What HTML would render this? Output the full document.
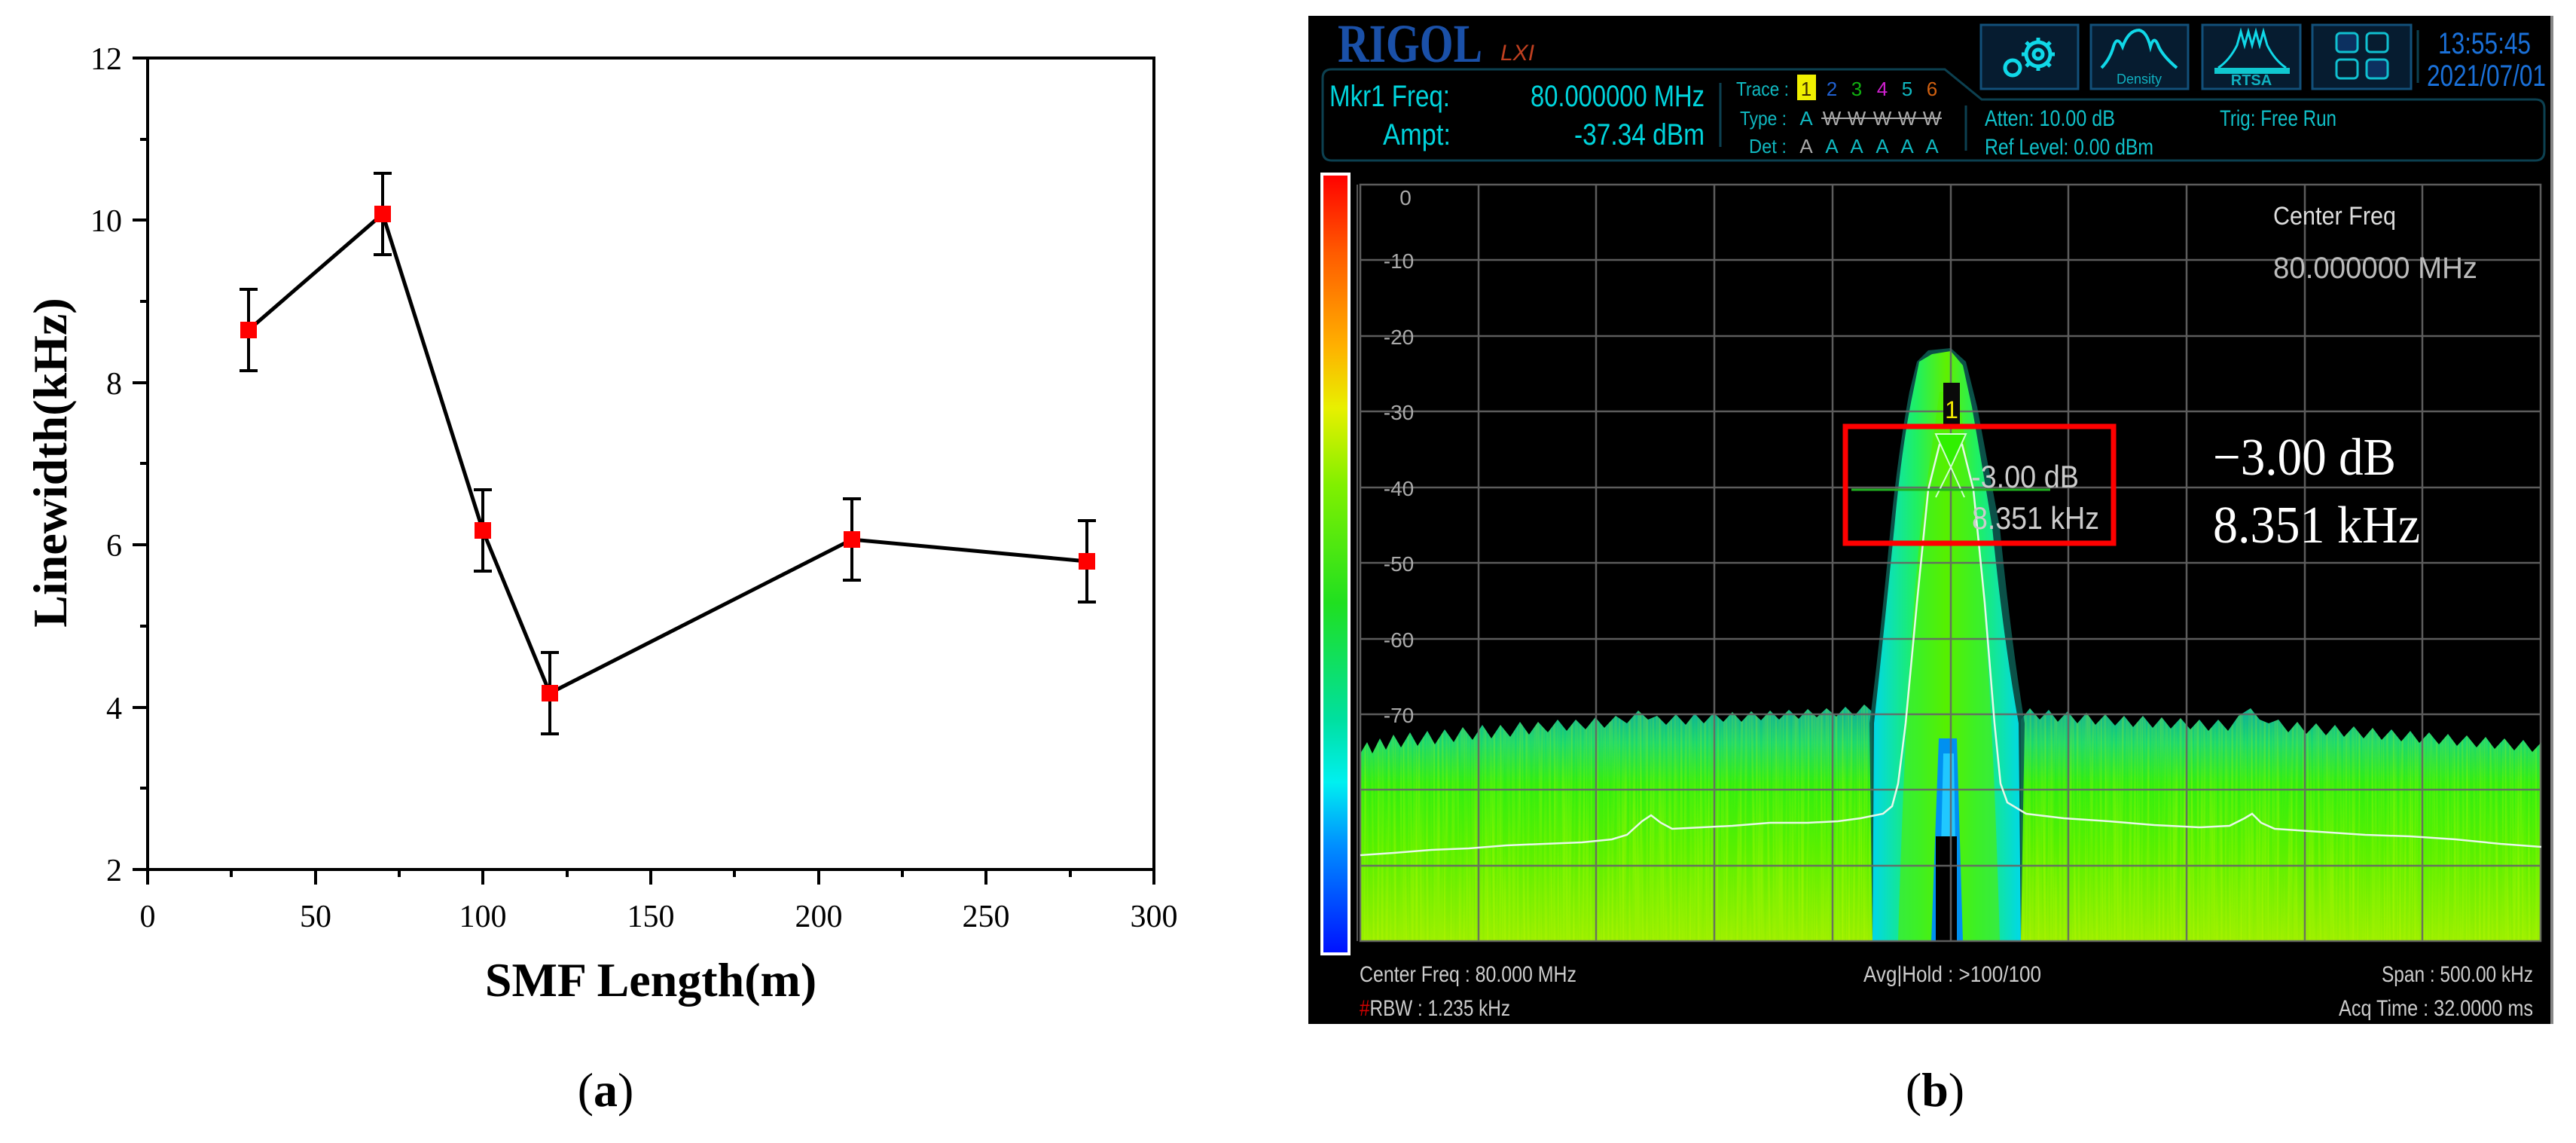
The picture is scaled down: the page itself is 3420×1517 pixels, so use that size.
<!DOCTYPE html>
<html><head><meta charset="utf-8">
<style>
html,body{margin:0;padding:0;background:#fff;width:3420px;height:1517px;overflow:hidden}
svg{display:block}
.ser{font-family:"Liberation Serif",serif}
.nar{font-family:"Liberation Sans",sans-serif}
</style></head><body>
<svg width="3420" height="1517" viewBox="0 0 3420 1517" xmlns="http://www.w3.org/2000/svg">
<defs>
<linearGradient id="cbar" x1="0" y1="0" x2="0" y2="1">
<stop offset="0" stop-color="#ff0000"/><stop offset="0.1" stop-color="#ff5a00"/><stop offset="0.22" stop-color="#ffb000"/>
<stop offset="0.3" stop-color="#e8f000"/><stop offset="0.4" stop-color="#80f000"/><stop offset="0.55" stop-color="#20e020"/>
<stop offset="0.7" stop-color="#00e0a0"/><stop offset="0.78" stop-color="#00f0f0"/><stop offset="0.86" stop-color="#0090ff"/>
<stop offset="1" stop-color="#0010ff"/></linearGradient>
<linearGradient id="floor" x1="0" y1="950" x2="0" y2="1249" gradientUnits="userSpaceOnUse">
<stop offset="0" stop-color="#10b890"/><stop offset="0.12" stop-color="#18d870"/><stop offset="0.3" stop-color="#30ee10"/>
<stop offset="0.6" stop-color="#58f000"/><stop offset="1" stop-color="#98ee00"/></linearGradient>
<linearGradient id="pk2" x1="0" y1="0" x2="1" y2="0">
<stop offset="0" stop-color="#00d8e8"/><stop offset="0.3" stop-color="#20f060"/><stop offset="0.5" stop-color="#60f000"/><stop offset="0.7" stop-color="#20f060"/><stop offset="1" stop-color="#00d8e8"/></linearGradient>
<filter id="streak" x="0" y="0" width="1" height="1">
<feTurbulence type="fractalNoise" baseFrequency="0.35 0.004" numOctaves="2" seed="3"/>
<feColorMatrix type="matrix" values="0 0 0 0 0.7  0 0 0 0 1  0 0 0 0 0  0 0 0 1.2 -0.45"/>
</filter>
<clipPath id="flc"><use href="#fl"/></clipPath>
</defs>

<g stroke="#000" stroke-width="4" fill="none">
<rect x="196" y="77" width="1336" height="1077"/>
<path d="M176 77H196 M176 292H196 M176 508H196 M176 723H196 M176 939H196 M176 1154H196 M186 185H196 M186 400H196 M186 615H196 M186 831H196 M186 1046H196"/>
<path d="M196 1154V1174 M419 1154V1174 M641 1154V1174 M864 1154V1174 M1087 1154V1174 M1309 1154V1174 M1532 1154V1174 M307 1154V1164 M530 1154V1164 M753 1154V1164 M975 1154V1164 M1198 1154V1164 M1421 1154V1164"/>
</g>
<g class="ser" font-size="42" fill="#000" text-anchor="end">
<text x="162" y="92">12</text><text x="162" y="307">10</text><text x="162" y="523">8</text>
<text x="162" y="738">6</text><text x="162" y="954">4</text><text x="162" y="1169">2</text>
</g>
<g class="ser" font-size="42" fill="#000" text-anchor="middle">
<text x="196" y="1230">0</text><text x="419" y="1230">50</text><text x="641" y="1230">100</text><text x="864" y="1230">150</text>
<text x="1087" y="1230">200</text><text x="1309" y="1230">250</text><text x="1532" y="1230">300</text>
</g>
<text class="ser" font-size="64" font-weight="bold" text-anchor="middle" transform="translate(88,614) rotate(-90)">Linewidth(kHz)</text>
<text class="ser" font-size="64" font-weight="bold" text-anchor="middle" x="864" y="1322">SMF Length(m)</text>
<text class="ser" font-size="64" text-anchor="middle" x="804" y="1468">(<tspan font-weight="bold">a</tspan>)</text>
<polyline points="330,438 508,284 641,704 730,920 1131,716 1443,745" fill="none" stroke="#000" stroke-width="5"/>
<g stroke="#000" stroke-width="4">
<path d="M330 384V492 M318 384H342 M318 492H342"/>
<path d="M508 230V338 M496 230H520 M496 338H520"/>
<path d="M641 650V758 M629 650H653 M629 758H653"/>
<path d="M730 866V974 M718 866H742 M718 974H742"/>
<path d="M1131 662V770 M1119 662H1143 M1119 770H1143"/>
<path d="M1443 691V799 M1431 691H1455 M1431 799H1455"/>
</g>
<g fill="#f00">
<rect x="319" y="427" width="22" height="22"/><rect x="497" y="273" width="22" height="22"/>
<rect x="630" y="693" width="22" height="22"/><rect x="719" y="909" width="22" height="22"/>
<rect x="1120" y="705" width="22" height="22"/><rect x="1432" y="734" width="22" height="22"/>
</g>

<rect x="1737" y="21" width="1653" height="1338" fill="#000"/>
<rect x="3386" y="21" width="4" height="1338" fill="#888"/>
<text x="1776" y="82" font-family="Liberation Serif,serif" font-weight="bold" font-size="72" fill="#1a50a8" textLength="192" lengthAdjust="spacingAndGlyphs">RIGOL</text>
<text x="1992" y="80" font-family="Liberation Sans,sans-serif" font-style="italic" font-size="30" fill="#c04020">LXI</text>
<path d="M1768 92H2582L2631 132H3366Q3378 132 3378 144V200Q3378 213 3366 213H1768Q1756 213 1756 200V104Q1756 92 1768 92Z" fill="none" stroke="#0c4050" stroke-width="3"/>
<g class="nar" fill="#00d4dc" font-size="40">
<text x="1765" y="141" textLength="160" lengthAdjust="spacingAndGlyphs">Mkr1 Freq:</text>
<text x="1836" y="192" textLength="90" lengthAdjust="spacingAndGlyphs">Ampt:</text>
<text x="2032" y="141" textLength="231" lengthAdjust="spacingAndGlyphs">80.000000 MHz</text>
<text x="2090" y="192" textLength="173" lengthAdjust="spacingAndGlyphs">-37.34 dBm</text>
</g>
<path d="M2284 110V195 M2610 140V200 M3210 40V110" stroke="#0c4050" stroke-width="3"/>
<g class="nar" font-size="26" fill="#10b8c0">
<text x="2305" y="127" textLength="70" lengthAdjust="spacingAndGlyphs">Trace :</text>
<text x="2310" y="166" textLength="62" lengthAdjust="spacingAndGlyphs">Type :</text>
<text x="2322" y="203" textLength="50" lengthAdjust="spacingAndGlyphs">Det :</text>
</g>
<rect x="2386" y="99" width="25" height="34" fill="#f0f000"/>
<g class="nar" font-size="26" text-anchor="middle">
<text x="2398" y="127" fill="#403000">1</text><text x="2432" y="127" fill="#2060d0">2</text><text x="2465" y="127" fill="#10b010">3</text>
<text x="2499" y="127" fill="#d020d0">4</text><text x="2532" y="127" fill="#10b8c0">5</text><text x="2565" y="127" fill="#d06010">6</text>
<text x="2398" y="166" fill="#10b8c0">A</text><text x="2432" y="166" fill="#aaa">W</text><text x="2465" y="166" fill="#aaa">W</text>
<text x="2499" y="166" fill="#aaa">W</text><text x="2532" y="166" fill="#aaa">W</text><text x="2565" y="166" fill="#aaa">W</text>
<text x="2398" y="203" fill="#aaa">A</text><text x="2432" y="203" fill="#10b8c0">A</text><text x="2465" y="203" fill="#10b8c0">A</text>
<text x="2499" y="203" fill="#10b8c0">A</text><text x="2532" y="203" fill="#10b8c0">A</text><text x="2565" y="203" fill="#10b8c0">A</text>
</g>
<path d="M2418 157H2578" stroke="#aaa" stroke-width="2"/>
<g class="nar" font-size="30" fill="#10c0c8">
<text x="2635" y="167" textLength="173" lengthAdjust="spacingAndGlyphs">Atten: 10.00 dB</text>
<text x="2635" y="205" textLength="224" lengthAdjust="spacingAndGlyphs">Ref Level: 0.00 dBm</text>
<text x="2947" y="167" textLength="155" lengthAdjust="spacingAndGlyphs">Trig: Free Run</text>
</g>
<g fill="#061c30" stroke="#12507a" stroke-width="3">
<rect x="2630" y="33" width="129" height="85"/><rect x="2776" y="33" width="129" height="85"/>
<rect x="2924" y="33" width="130" height="85"/><rect x="3070" y="33" width="131" height="85"/>
</g>
<g fill="none" stroke="#10d8e8" stroke-width="5">
<circle cx="2706" cy="72" r="16"/><circle cx="2706" cy="72" r="6"/><circle cx="2672" cy="90" r="10"/>
<path d="M2706 50V56 M2706 88V94 M2684 72H2690 M2722 72H2728 M2690 56L2694 60 M2718 84L2722 88 M2722 56L2718 60 M2690 88L2694 84"/>
<path d="M2790 90Q2800 80 2805 65Q2810 45 2818 62Q2826 40 2840 40Q2850 42 2855 62Q2860 45 2866 62Q2872 75 2890 90" stroke-width="4"/>
<path d="M2945 90Q2960 80 2970 60L2975 42L2980 60L2985 42L2990 60L2995 42L3000 60L3005 42L3010 60Q3020 80 3035 90" stroke-width="3"/>
</g>
<rect x="2940" y="90" width="100" height="8" fill="#10c8d0"/>
<text x="2840" y="111" text-anchor="middle" class="nar" font-size="18" fill="#10b0c0">Density</text>
<text x="2989" y="113" text-anchor="middle" class="nar" font-size="20" font-weight="bold" fill="#10b0c0">RTSA</text>
<g fill="#0c3060" stroke="#10c0d0" stroke-width="3">
<rect x="3102" y="44" width="28" height="25" rx="5"/><rect x="3142" y="44" width="28" height="25" rx="5" fill="none"/>
<rect x="3102" y="79" width="28" height="25" rx="5" fill="none"/><rect x="3142" y="79" width="28" height="25" rx="5"/>
</g>
<g class="nar" fill="#1a70d8" font-size="40">
<text x="3237" y="71" textLength="123" lengthAdjust="spacingAndGlyphs">13:55:45</text>
<text x="3222" y="114" textLength="158" lengthAdjust="spacingAndGlyphs">2021/07/01</text>
</g>

<rect x="1755" y="231" width="36" height="1035" fill="url(#cbar)" stroke="#fff" stroke-width="4"/>
<path d="M1802 245V1249" stroke="#555" stroke-width="2"/>

<path id="fl" d="M1806 1249V1000L1815 985L1822 1000L1832 980L1840 995L1850 975L1860 992L1872 972L1882 990L1895 970L1905 988L1918 968L1930 985L1942 965L1955 982L1968 962L1980 980L1992 962L2005 978L2018 958L2030 975L2042 958L2055 972L2068 955L2080 970L2092 955L2105 968L2118 952L2130 966L2145 950L2160 960L2175 943L2188 955L2200 950L2212 962L2225 948L2238 962L2250 947L2262 960L2275 946L2288 958L2300 945L2312 958L2325 944L2338 956L2350 943L2362 955L2375 942L2388 954L2400 941L2412 952L2425 940L2438 951L2450 938L2462 950L2475 935L2486 945L2486 1249Z M2683 1249V955L2695 940L2708 955L2720 942L2732 958L2745 944L2758 960L2770 946L2782 962L2795 948L2808 963L2820 950L2832 965L2845 950L2858 966L2870 952L2882 967L2895 953L2908 968L2920 955L2932 970L2945 955L2958 970L2972 950L2988 940L3000 955L3012 960L3025 955L3038 972L3050 958L3062 974L3075 960L3088 976L3100 962L3112 978L3125 964L3138 980L3150 966L3162 982L3175 968L3188 984L3200 970L3212 986L3225 972L3238 988L3250 974L3262 990L3275 976L3288 992L3300 978L3312 994L3325 980L3338 996L3350 982L3362 998L3374 985V1249Z" fill="url(#floor)"/>
<g clip-path="url(#flc)"><rect x="1806" y="930" width="1568" height="319" filter="url(#streak)" opacity="0.6"/></g>
<path d="M2486 1249L2482 960Q2495 860 2510 700Q2520 600 2535 520L2545 480L2560 465L2590 462L2610 480L2625 540Q2640 620 2655 700Q2670 850 2688 960L2683 1249Z" fill="#0c5a50" opacity="0.9"/>
<path d="M2486 1249L2488 960Q2500 850 2515 700Q2525 590 2540 520L2548 480L2565 470L2590 466L2606 485L2618 540Q2632 620 2645 700Q2660 850 2680 960L2683 1249Z" fill="url(#pk2)"/>
<path d="M2520 1249Q2530 900 2550 700L2575 520L2600 520L2625 700Q2645 900 2655 1249Z" fill="#50f000" opacity="0.6"/>
<path d="M2574 980L2598 980L2606 1249L2564 1249Z" fill="#0090f0"/>
<path d="M2580 1000L2594 1000L2598 1249L2574 1249Z" fill="#20c8ff"/>
<rect x="2570" y="1110" width="28" height="139" fill="#000"/>

<g stroke="#666" stroke-width="2.5" fill="none" opacity="0.9">
<rect x="1806" y="245" width="1567" height="1004"/>
<path d="M1963 245V1249M2119 245V1249M2276 245V1249M2433 245V1249M2590 245V1249M2746 245V1249M2903 245V1249M3060 245V1249M3216 245V1249"/>
<path d="M1806 345H3373M1806 446H3373M1806 546H3373M1806 647H3373M1806 747H3373M1806 848H3373M1806 948H3373M1806 1048H3373M1806 1149H3373"/>
</g>
<polyline fill="none" stroke="#e8f8e8" stroke-width="2.5" points="1806,1135 1850,1132 1900,1128 1950,1126 2000,1122 2050,1120 2100,1118 2140,1114 2160,1108 2180,1090 2192,1082 2205,1092 2220,1100 2260,1098 2300,1096 2350,1092 2400,1092 2440,1090 2470,1086 2500,1080 2512,1070 2520,1040 2530,960 2545,800 2560,650 2575,590 2590,578 2605,590 2620,650 2635,800 2648,960 2656,1040 2665,1065 2690,1080 2740,1086 2800,1090 2860,1095 2920,1098 2960,1096 2980,1086 2990,1080 3002,1092 3020,1100 3080,1104 3140,1108 3200,1110 3260,1114 3320,1120 3374,1124"/>
<rect x="2580" y="508" width="22" height="57" fill="#0a0a0a"/>
<text x="2591" y="555" text-anchor="middle" class="nar" font-size="32" fill="#f0e800">1</text>
<path d="M2570 576H2610L2590 620Z M2590 620L2570 660 M2590 620L2608 660" fill="#30f000" stroke="#d0ffd0" stroke-width="2"/>
<path d="M2458 650H2722" stroke="#20b020" stroke-width="3"/>
<rect x="2450" y="566" width="356" height="155" fill="none" stroke="#f00" stroke-width="7"/>
<g class="nar" font-size="42" fill="#ccc">
<text x="2617" y="647" textLength="143" lengthAdjust="spacingAndGlyphs">-3.00 dB</text>
<text x="2618" y="702" textLength="169" lengthAdjust="spacingAndGlyphs">8.351 kHz</text>
</g>
<g class="ser" font-size="70" fill="#fff">
<text x="2938" y="630" textLength="243" lengthAdjust="spacingAndGlyphs">−3.00 dB</text>
<text x="2938" y="720" textLength="275" lengthAdjust="spacingAndGlyphs">8.351 kHz</text>
</g>
<g class="nar" font-size="28" fill="#aaa" text-anchor="middle">
<text x="1866" y="272">0</text><text x="1857" y="356">-10</text><text x="1857" y="457">-20</text><text x="1857" y="557">-30</text>
<text x="1857" y="658">-40</text><text x="1857" y="758">-50</text><text x="1857" y="859">-60</text><text x="1857" y="959">-70</text>
</g>
<text x="3018" y="298" class="nar" font-size="34" fill="#ddd" textLength="163" lengthAdjust="spacingAndGlyphs">Center Freq</text>
<text x="3018" y="369" class="nar" font-size="40" fill="#bbb" textLength="271" lengthAdjust="spacingAndGlyphs">80.000000 MHz</text>
<g class="nar" font-size="30" fill="#ccc">
<text x="1805" y="1303" textLength="288" lengthAdjust="spacingAndGlyphs">Center Freq : 80.000 MHz</text>
<text x="1805" y="1348" textLength="200" lengthAdjust="spacingAndGlyphs"><tspan fill="#d00000">#</tspan>RBW : 1.235 kHz</text>
<text x="2474" y="1303" textLength="236" lengthAdjust="spacingAndGlyphs">Avg|Hold : &gt;100/100</text>
<text x="3162" y="1303" textLength="201" lengthAdjust="spacingAndGlyphs">Span : 500.00 kHz</text>
<text x="3105" y="1348" textLength="258" lengthAdjust="spacingAndGlyphs">Acq Time : 32.0000 ms</text>
</g>
<text class="ser" font-size="64" text-anchor="middle" x="2569" y="1468">(<tspan font-weight="bold">b</tspan>)</text>
</svg>
</body></html>
